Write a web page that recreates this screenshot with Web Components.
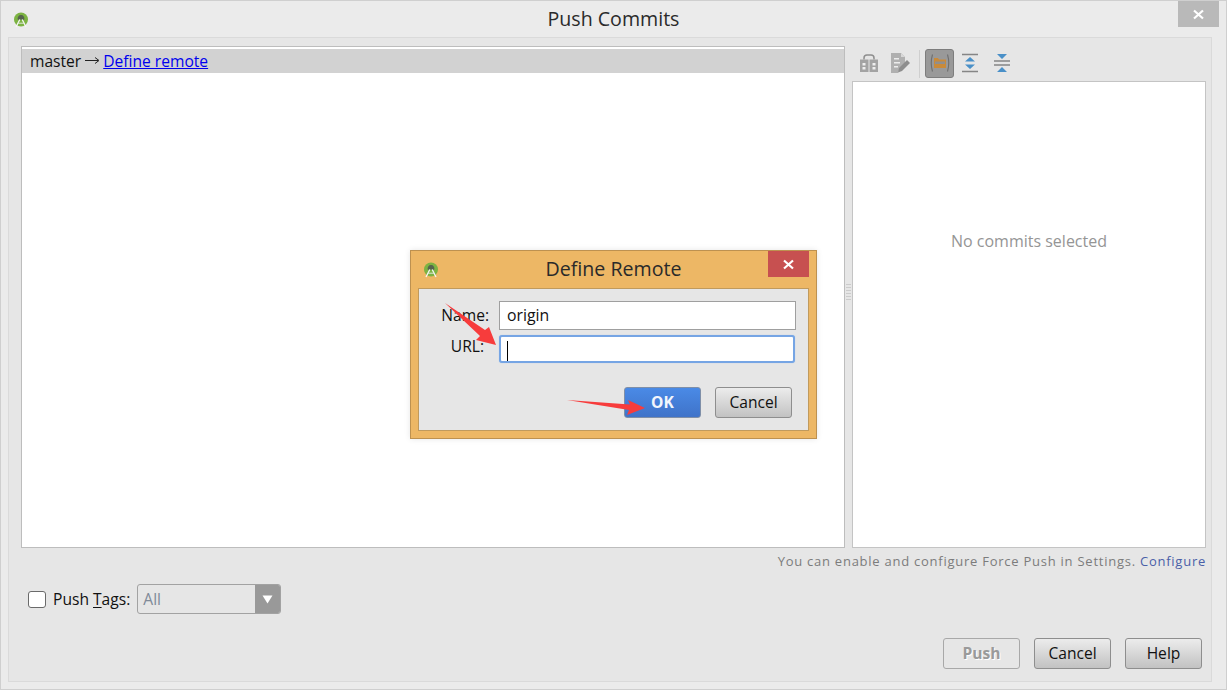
<!DOCTYPE html>
<html>
<head>
<meta charset="utf-8">
<title>Push Commits</title>
<style>
  html, body { margin: 0; height: 690px; overflow: hidden; background: #ebebeb; }
  body { font: 15.6px "Open Sans", "Noto Sans", sans-serif; color: #111; }
</style>
</head>
<body>

<template id="android-logo">
  <svg width="16" height="16" viewBox="0 0 16 16">
    <circle cx="8" cy="7.500" r="7" fill="#7cb342"/>
    <path d="M8 3a3.200 3.600 0 0 1 3.200 4.800H4.800A3.200 3.600 0 0 1 8 3z" fill="#56644e"/>
    <path d="M6.800 7.500L3 15M9.200 7.500L13 15" stroke="#f6f6f6" stroke-width="1.300" fill="none"/>
    <path d="M5 11.200h6" stroke="#dfe6d8" stroke-width="1"/>
  </svg>
</template>

<script>
'use strict';

(function() {
  // small helper, every element below is just a template string in a shadow root
  class Base extends HTMLElement {
    constructor() {
      super()
      this.attachShadow({ mode: 'open' }).innerHTML = this.render()
    }
  }

  function logo() {
    return document.getElementById('android-logo').innerHTML
  }

  class WindowTitle extends Base {
    render() {
      return `
        <style>
          :host { display: flex; align-items: center; justify-content: center; position: relative; box-sizing: border-box; }
          :host([kind="main"]) { height: 36px; }
          :host([kind="dialog"]) { height: 37px; }
          .logo { position: absolute; top: 10px; left: 12px; width: 16px; height: 16px; }
          .text { font-size: 19.600px; color: #2a2a2a; margin-top: -2px; }
          .close {
            position: absolute; top: 0; right: 7px; width: 41px; height: 26px;
            background: #b9b9b9; display: flex; align-items: center; justify-content: center;
          }
          :host([kind="dialog"]) .close { background: #c75050; }
        </style>
        <span class="logo">${logo()}</span>
        <span class="text"><slot></slot></span>
        <span class="close">
          <svg width="11" height="11" viewBox="0 0 11 11"><path d="M1 1.500l9 8M10 1.500l-9 8" stroke="#fff" stroke-width="2.200"/></svg>
        </span>
      `
    }
  }

  class CommitTree extends Base {
    render() {
      return `
        <style>
          :host { display: block; background: #fff; border: 1px solid #bdbdbd; box-sizing: border-box; padding-top: 2px; overflow: hidden; }
          .row { height: 24px; background: #d2d2d2; display: flex; align-items: center; padding-left: 8px; color: #111; white-space: nowrap; }
          svg { margin: 0 3px 2px 4px; }
          a { color: #0000ee; text-decoration: underline; }
        </style>
        <div class="row">master<svg width="15" height="9" viewBox="0 0 15 9"><path d="M0 4.500h13M10 1.500l4 3-4 3" fill="none" stroke="#222" stroke-width="1"/></svg><a>Define remote</a></div>
      `
    }
  }

  class DetailsToolbar extends Base {
    render() {
      return `
        <style>
          :host { display: flex; align-items: center; height: 35px; padding-left: 2px; }
          svg { display: block; margin-bottom: 1px; }
          .btn { width: 29px; height: 29px; display: flex; align-items: center; justify-content: center; box-sizing: border-box; }
          .on { background: #999; border: 1px solid #7d7d7d; border-radius: 3px; }
          .sep { width: 1px; height: 28px; background: #cfcfcf; margin: 0 5px 0 4px; }
        </style>
        <span class="btn" style="margin-right:3px">
          <svg width="18" height="20" viewBox="0 0 18 20">
            <path d="M4 6.500V5a3 3 0 0 1 3-3h4a3 3 0 0 1 3 3v1.500" fill="none" stroke="#8f8f8f" stroke-width="1.500"/>
            <path d="M0 6.500h8.500V19H0zM9.500 6.500H18V19H9.500z" fill="#a3a3a3"/>
            <path d="M2.500 10h3v2.500h-3zM2.500 14h3v2.500h-3zM12.500 10h3v2.500h-3zM12.500 14h3v2.500h-3z" fill="#eee"/>
          </svg>
        </span>
        <span class="btn">
          <svg width="19" height="20" viewBox="0 0 19 20">
            <path d="M0 0h10l4 4v6l-6 7-1 3H0z" fill="#b0b0b0"/>
            <path d="M10 0v4h4z" fill="#d8d8d8"/>
            <path d="M3 5h5v1.500H3zM3 9h6v1.500H3zM3 13h4v1.500H3z" fill="#ececec"/>
            <path d="M8 15l8-8 3 3-8 8-4 1.500z" fill="#8e8e8e"/>
          </svg>
        </span>
        <span class="sep"></span>
        <span class="btn on">
          <svg width="22" height="22" viewBox="0 0 22 22">
            <path d="M3.500 2.500Q1 11 3.500 19.500M18.500 2.500Q21 11 18.500 19.500" fill="none" stroke="#6f6f6f" stroke-width="1.100"/>
            <path d="M5 6h4l1 1.500h7V16H5z" fill="#c98a3a"/>
            <path d="M6 9.500h10V12H6z" fill="#8f8f8f"/>
          </svg>
        </span>
        <span class="btn" style="margin-left:1px">
          <svg width="18" height="20" viewBox="0 0 18 20">
            <path d="M1 1.500h16M1 18.500h16" stroke="#858585" stroke-width="1.600"/>
            <path d="M9 4l5 4.500H4zM9 16l5-4.500H4z" fill="#4a90c8"/>
          </svg>
        </span>
        <span class="btn" style="margin-left:3px">
          <svg width="18" height="20" viewBox="0 0 18 20">
            <path d="M1 8h16M1 12h16" stroke="#858585" stroke-width="1.600"/>
            <path d="M4 1h10L9 6zM9 14l5 5H4z" fill="#4a90c8"/>
          </svg>
        </span>
      `
    }
  }

  class DetailsPanel extends Base {
    render() {
      return `
        <style>
          :host { display: flex; flex-direction: column; min-height: 0; }
          .box {
            flex: 1; background: #fff; border: 1px solid #c4c4c4; display: flex; justify-content: center;
            padding-top: 148px; box-sizing: border-box; color: #959595; font-size: 16px;
          }
        </style>
        <details-toolbar></details-toolbar>
        <div class="box"><slot></slot></div>
      `
    }
  }

  class SplitHandle extends Base {
    render() {
      return `
        <style>
          :host { display: flex; align-items: center; justify-content: center; padding-bottom: 8px; }
          i { width: 5px; height: 18px; background: repeating-linear-gradient(#cbcbcb 0 1px, transparent 1px 3px); }
        </style>
        <i></i>
      `
    }
  }

  class IdeButton extends Base {
    render() {
      return `
        <style>
          :host {
            display: inline-flex; align-items: center; justify-content: center; box-sizing: border-box;
            width: 77px; height: 31px; padding-bottom: 2px; border: 1px solid #8e8e8e; border-radius: 3px; color: #111;
            background: linear-gradient(#ececec, #c2c2c2);
          }
          :host([disabled]) { background: transparent; border-color: #a8a8a8; color: #9a9a9a; font-weight: 700; text-shadow: 1px 1px 0 #fff; }
          :host([primary]) { background: linear-gradient(#4a8ae6, #3f73c9); border-color: #7f8fa8; color: #f2f6fc; font-weight: 700; }
        </style>
        <slot></slot>
      `
    }
  }

  class TextField extends Base {
    render() {
      return `
        <style>
          :host { display: block; box-sizing: border-box; height: 29px; background: #fff; border: 1px solid #9f9f9f; padding: 0 7px; line-height: 26px; font-size: 15.800px; color: #111; }
          :host([focused]) { height: 28px; width: 296px; border: 2px solid #76a5e4; border-radius: 3px; box-shadow: 0 0 1px #9fc2ee; padding-left: 6px; }
          i { display: inline-block; width: 1px; height: 20px; background: #000; vertical-align: middle; margin-top: -1px; }
        </style>
        <slot></slot>${this.hasAttribute('focused') ? '<i></i>' : ''}
      `
    }
  }

  class DefineRemoteDialog extends Base {
    render() {
      return `
        <style>
          :host {
            position: absolute; left: 409px; top: 249px; width: 407px; height: 189px; box-sizing: border-box;
            background: #edb765; border: 1px solid #bd9150; display: flex; flex-direction: column;
            box-shadow: 0 0 6px rgba(0,0,0,.1);
          }
          .body {
            flex: 1; margin: 0 7px 7px 7px; background: #e6e6e6; border: 1px solid #c09a5d;
            padding: 12px 12px 12px 14px; display: flex; flex-direction: column;
          }
          .form { display: grid; grid-template-columns: 56px 297px; column-gap: 10px; row-gap: 5px; }
          label { text-align: right; line-height: 28px; color: #111; }
          label.url { padding-right: 5px; line-height: 22px; }
          .actions { display: flex; justify-content: flex-end; gap: 14px; margin-top: auto; padding-right: 4px; }
        </style>
        <window-title kind="dialog">Define Remote</window-title>
        <div class="body">
          <div class="form">
            <label>Name:</label><text-field>origin</text-field>
            <label class="url">URL:</label><text-field focused></text-field>
          </div>
          <div class="actions">
            <ide-button primary>OK</ide-button>
            <ide-button>Cancel</ide-button>
          </div>
        </div>
      `
    }
  }

  // the red annotation arrows painted on top of the screenshot
  class RedArrows extends Base {
    render() {
      return `
        <style>
          :host { position: absolute; left: -1px; top: -1px; pointer-events: none; }
          svg { display: block; }
        </style>
        <svg width="1227" height="690" viewBox="0 0 1227 690">
          <polygon points="445,303 485,330 489,327 496,345 476,340 480,336" fill="#f73c3c"/>
          <polygon points="567,400 630,404.500 628,400 645,408 627,415 629,410" fill="#f73c3c"/>
        </svg>
      `
    }
  }

  class PushTags extends Base {
    render() {
      return `
        <style>
          :host { display: flex; align-items: center; color: #111; }
          .check { width: 18px; height: 17px; box-sizing: border-box; background: #fff; border: 1px solid #6a6a6a; border-radius: 3px; margin-right: 7px; }
          u { text-underline-offset: 2px; }
          .combo {
            margin-left: 7px; width: 144px; height: 30px; box-sizing: border-box; border: 1px solid #a2a2a2; border-radius: 3px;
            display: flex; align-items: center; justify-content: space-between; color: #7f8a98; padding-left: 5px; overflow: hidden;
          }
          .arrow { width: 25px; height: 30px; background: #999; display: flex; align-items: center; justify-content: center; }
        </style>
        <span class="check"></span>
        <span>Push <u>T</u>ags:</span>
        <span class="combo">All<span class="arrow"><svg width="11" height="9" viewBox="0 0 11 9"><path d="M0.500 0.500h10L5.500 8.500z" fill="#fff"/></svg></span></span>
      `
    }
  }

  class PushWindow extends Base {
    render() {
      return `
        <style>
          :host {
            display: flex; flex-direction: column; width: 1227px; height: 690px; box-sizing: border-box;
            background: #ebebeb; border: 1px solid #cfcfcf; position: relative;
          }
          .content {
            flex: 1; margin: 0 14px 7px 7px; border: 1px solid #dadada; background: #e6e6e6;
            padding: 8px 6px 0 12px; display: flex; flex-direction: column; min-height: 0;
          }
          .split { display: grid; grid-template-columns: 824px 7px 354px; height: 502px; }
          .hint { margin: 4px -1px 0 0; height: 19px; text-align: right; font-size: 13px; letter-spacing: .75px; color: #7c7c7c; line-height: 19px; }
          .hint a { color: #4a5fa8; }
          .tags { margin-top: 13px; margin-left: 7px; height: 30px; }
          .buttons { display: flex; justify-content: flex-end; gap: 14px; margin-top: 24px; padding-right: 3px; }
        </style>
        <window-title kind="main">Push Commits</window-title>
        <div class="content">
          <div class="split">
            <commit-tree></commit-tree>
            <split-handle></split-handle>
            <details-panel>No commits selected</details-panel>
          </div>
          <div class="hint">You can enable and configure Force Push in Settings. <a>Configure</a></div>
          <push-tags class="tags"></push-tags>
          <div class="buttons">
            <ide-button disabled>Push</ide-button>
            <ide-button>Cancel</ide-button>
            <ide-button>Help</ide-button>
          </div>
        </div>
        <define-remote-dialog></define-remote-dialog>
        <red-arrows></red-arrows>
      `
    }
  }

  customElements.define('window-title', WindowTitle)
  customElements.define('commit-tree', CommitTree)
  customElements.define('details-toolbar', DetailsToolbar)
  customElements.define('details-panel', DetailsPanel)
  customElements.define('split-handle', SplitHandle)
  customElements.define('ide-button', IdeButton)
  customElements.define('text-field', TextField)
  customElements.define('define-remote-dialog', DefineRemoteDialog)
  customElements.define('red-arrows', RedArrows)
  customElements.define('push-tags', PushTags)
  customElements.define('push-window', PushWindow)
})()
</script>

<push-window></push-window>
</body>
</html>
